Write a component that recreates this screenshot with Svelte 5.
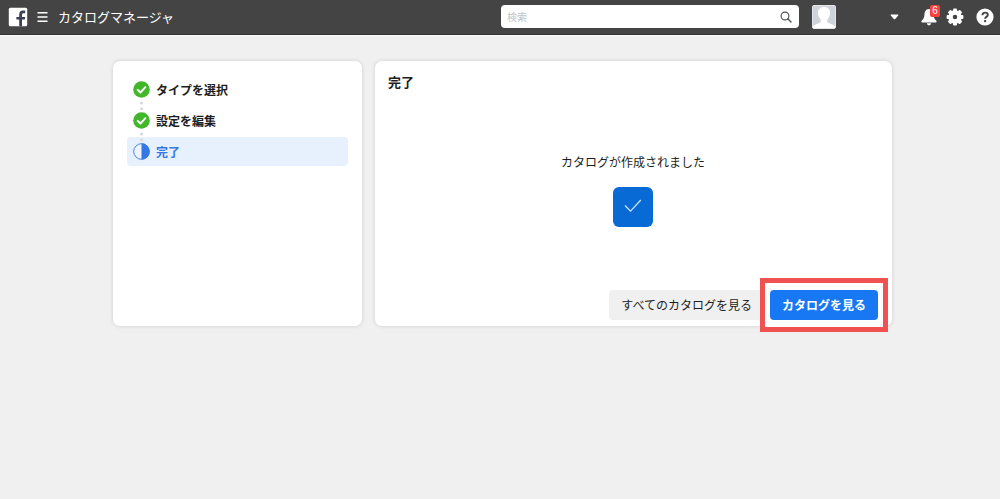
<script>
  const steps = [
    { label: 'タイプを選択', done: true },
    { label: '設定を編集', done: true },
    { label: '完了', done: false }
  ];
  const teeth = [0, 45, 90, 135, 180, 225, 270, 315];
</script>

<header>
  <a class="logo" href="#home" aria-label="Facebook">
    <svg width="20" height="20" viewBox="0 0 20 20">
      <rect x="0.8" y="0.8" width="18.4" height="18.4" rx="1.5" fill="#fff" />
      <path d="M11.200 19.200v-6.700H8.400V9.900h2.800V7.400C11.200 4.900 12.600 3.600 15 3.600h2.200v2.600h-1.500c-1.300 0-1.700.6-1.700 1.600v2.100h3.200l-.4 2.600H14v6.700z" fill="#3b4252" />
    </svg>
  </a>
  <button class="icon menu" aria-label="メニュー">
    <svg width="11" height="12" viewBox="0 0 11 12" fill="#fff">
      <path d="M0.500 1h10v1.600h-10zM0.500 5.200h10v1.600h-10zM0.500 9.400h10v1.600h-10z" />
    </svg>
  </button>
  <span class="title">カタログマネージャ</span>
  <form class="search">
    <input type="search" placeholder="検索" aria-label="検索" />
    <button class="icon" type="button" aria-label="検索する">
      <svg width="12" height="12" viewBox="0 0 12 12" fill="none" stroke="#4b4f56">
        <circle cx="5" cy="5" r="3.9" stroke-width="1.1" />
        <path d="M7.8 7.8l3.200 3.200" stroke-width="1.400" stroke-linecap="round" />
      </svg>
    </button>
  </form>
  <button class="icon account" aria-label="アカウント">
    <svg width="24" height="24" viewBox="0 0 24 24">
      <rect x="0.500" y="0.500" width="23" height="23" rx="1.500" fill="#d0d3da" stroke="#e4e6ea" />
      <path d="M1 23v-1.500c.5-2 6-2.500 7.500-4.500.6-.8.500-1.800 0-2.600C6.800 12.500 5.800 10 6 7.300 6.200 4 8.500 2 12 2s5.800 2 6 5.300c.2 2.700-.8 5.200-2.500 7.100-.5.800-.6 1.800 0 2.600 1.500 2 7 2.500 7.500 4.500V23z" fill="#fff" />
    </svg>
    <svg width="9" height="6" viewBox="0 0 9 6" fill="#fff">
      <path d="M1.200 0.500h6.600q1 0 .4.900L5.200 4.900q-.7.700-1.400 0L.8 1.400Q.2.500 1.200.5z" />
    </svg>
  </button>
  <button class="icon bell" aria-label="お知らせ">
    <svg width="16" height="18" viewBox="0 0 16 18" fill="#fff">
      <path d="M8 1C4.600 1 3.600 4 3.400 7 3.200 9.800 2.400 11 .8 12.500c-.8.800-.5 2 .6 2h13.200c1.100 0 1.400-1.200.6-2C13.600 11 12.800 9.800 12.600 7 12.400 4 11.400 1 8 1z" />
      <path d="M5.800 15.300h4.400c-.3 1.500-1.200 2-2.200 2s-1.900-.5-2.200-2z" />
    </svg>
    <span class="badge">6</span>
  </button>
  <button class="icon gear" aria-label="設定">
    <svg width="18" height="18" viewBox="0 0 18 18">
      {#each teeth as angle}
        <rect x="7" y="0.600" width="4" height="5" rx="1" fill="#fff" transform={`rotate(${angle} 9 9)`} />
      {/each}
      <circle cx="9" cy="9" r="4.500" fill="none" stroke="#fff" stroke-width="4.400" />
    </svg>
  </button>
  <button class="icon help" aria-label="ヘルプ">
    <svg width="18" height="18" viewBox="0 0 18 18">
      <circle cx="9" cy="9" r="8.600" fill="#fff" />
      <path d="M6.400 7.300c0-1.700 1.100-2.700 2.700-2.700s2.700.9 2.700 2.300c0 1.900-2.700 2-2.700 3.800" fill="none" stroke="#444" stroke-width="1.900" />
      <circle cx="9.100" cy="13.100" r="1.200" fill="#444" />
    </svg>
  </button>
</header>

<main>
  <nav class="card steps" aria-label="ステップ">
    <ol>
      {#each steps as step}
        <li class:current={!step.done} aria-current={step.done ? undefined : 'step'}>
          <svg width="17" height="17" viewBox="0 0 17 17">
            {#if step.done}
              <circle cx="8.500" cy="8.500" r="8.300" fill="#42b72a" />
              <path d="M4.600 8.800l2.800 2.700 5-5.300" fill="none" stroke="#fff" stroke-width="1.900" stroke-linecap="round" stroke-linejoin="round" />
            {:else}
              <circle cx="8.500" cy="8.500" r="7.800" fill="#edf4ff" stroke="#3578e5" stroke-width="0.900" />
              <path d="M8.500 0.300a8.200 8.200 0 0 1 0 16.400z" fill="#3578e5" />
            {/if}
          </svg>
          <span>{step.label}</span>
        </li>
      {/each}
    </ol>
  </nav>

  <section class="card panel">
    <h1>完了</h1>
    <div class="result">
      <p>カタログが作成されました</p>
      <div class="tick">
        <svg width="18" height="14" viewBox="0 0 18 14" fill="none" stroke="#d3e6fa" stroke-width="1.200">
          <path d="M1 6.500l5.500 5.700L16.800 1" />
        </svg>
      </div>
    </div>
    <div class="actions">
      <button class="btn">すべてのカタログを見る</button>
      <div class="highlight">
        <button class="btn primary">カタログを見る</button>
      </div>
    </div>
  </section>
</main>

<style>
  :global(body) {
    background: #f0f0f0;
    color: #1c1e21;
    font: 12px/18px 'Noto Sans CJK JP', sans-serif;
  }
  :global(*) {
    box-sizing: border-box;
  }
  svg {
    display: block;
    flex: none;
  }
  button,
  input {
    font: inherit;
    border: 0;
    margin: 0;
  }
  .icon {
    display: flex;
    align-items: center;
    padding: 0;
    background: none;
  }
  header {
    display: flex;
    align-items: center;
    height: 35px;
    padding: 0 6px 1px 8px;
    background: #444;
    border-bottom: 1px solid #303030;
    box-shadow: 0 1px #fafafa;
  }
  .menu {
    margin-left: 9px;
  }
  .title {
    margin-left: 10px;
    color: #fff;
    font-size: 13px;
    white-space: nowrap;
  }
  .search {
    display: flex;
    flex: 0 1 298px;
    height: 23px;
    margin: 0 13px 0 auto;
    padding: 0 7px 0 6px;
    background: #fff;
    border-radius: 4px;
  }
  .search input {
    flex: 1;
    min-width: 0;
    padding: 0;
    background: none;
    font-size: 10px;
    outline: 0;
  }
  .search input::placeholder {
    color: #bec3c9;
  }
  .account {
    gap: 54px;
  }
  .bell {
    position: relative;
    margin-left: 22px;
  }
  .badge {
    position: absolute;
    top: -3px;
    right: -3px;
    width: 10px;
    height: 12px;
    background: #fa3e3e;
    border-radius: 2px;
    color: #fff;
    font: 10px/12px 'Liberation Sans', sans-serif;
    text-align: center;
  }
  .gear {
    margin-left: 9px;
  }
  .help {
    margin-left: 12px;
  }
  main {
    display: grid;
    grid-template-columns: 249fr 517fr;
    gap: 13px;
    padding: 26px 108px 26px 113px;
  }
  .card {
    background: #fff;
    border-radius: 7px;
    box-shadow: 0 0 4px rgba(0, 0, 0, 0.14);
  }
  .steps {
    padding: 14px;
  }
  ol {
    display: grid;
    gap: 2px;
    margin: 0;
    padding: 0;
    list-style: none;
  }
  li {
    position: relative;
    display: flex;
    align-items: center;
    gap: 6px;
    height: 29px;
    padding-left: 6px;
    border-radius: 4px;
    font-weight: 700;
  }
  li + li::before {
    content: '';
    position: absolute;
    left: 13px;
    top: -6px;
    width: 3px;
    height: 10px;
    background: radial-gradient(circle, #d5d8de 1px, transparent 2px) 0 0 / 3px 6px;
  }
  .current {
    background: #e7f1fe;
    color: #3578e5;
  }
  .panel {
    display: flex;
    flex-direction: column;
    padding: 12px 4px 0 13px;
  }
  h1 {
    margin: 0;
    font-size: 13px;
    line-height: 18px;
  }
  .result {
    display: flex;
    flex-direction: column;
    align-items: center;
    gap: 16px;
    padding: 62px 10px 51px 0;
  }
  p {
    margin: 0;
  }
  .tick {
    display: grid;
    place-items: center;
    width: 40px;
    height: 40px;
    padding-bottom: 3px;
    background: #086bd5;
    border-radius: 6px;
  }
  .actions {
    display: flex;
    justify-content: flex-end;
    align-items: center;
    margin-bottom: -6px;
  }
  .btn {
    height: 30px;
    padding: 0 12px;
    background: #f0f0f0;
    border-radius: 4px;
    color: #1c1e21;
    white-space: nowrap;
  }
  .primary {
    background: #1877f2;
    color: #fff;
    font-weight: 700;
  }
  .highlight {
    margin-left: -4px;
    padding: 7px 5px;
    background: #fff;
    border: 5px solid #f05252;
  }
</style>
